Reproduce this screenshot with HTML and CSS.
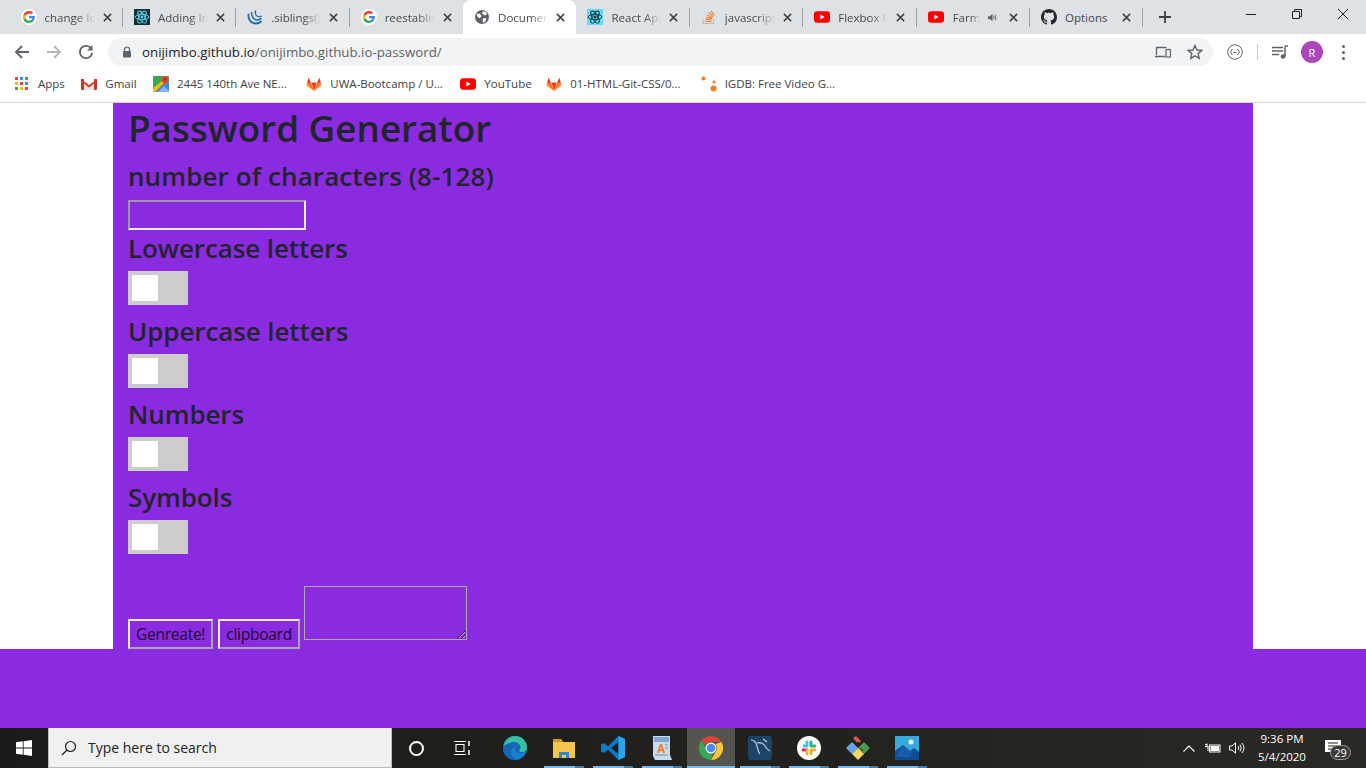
FILE: index.html
```html
<!DOCTYPE html>
<html lang="en">
<head>
<meta charset="utf-8">
<title>Document</title>
<link rel="stylesheet" href="styles.css">
</head>
<body>
<svg class="defs" width="0" height="0" aria-hidden="true">
  <symbol id="i-google" viewBox="0 0 16 16">
    <circle cx="8" cy="8" r="8" fill="#fff"/>
    <path d="M13.9 8.1c0-.4 0-.8-.1-1.2H8v2.300h3.300a2.900 2.900 0 0 1-1.200 1.900v1.500h2A6 6 0 0 0 13.900 8.100z" fill="#4285f4"/>
    <path d="M8 14c1.600 0 3-.5 4.100-1.400l-2-1.500c-.6.4-1.300.6-2.100.6-1.600 0-2.900-1.100-3.400-2.500H2.500v1.600A6 6 0 0 0 8 14z" fill="#34a853"/>
    <path d="M4.600 9.200a3.600 3.600 0 0 1 0-2.400V5.200H2.500a6 6 0 0 0 0 5.600z" fill="#fbbc05"/>
    <path d="M8 4.400c.9 0 1.700.3 2.300.9l1.800-1.800A6 6 0 0 0 2.500 5.200l2.100 1.600C5.100 5.400 6.400 4.400 8 4.400z" fill="#ea4335"/>
  </symbol>
  <symbol id="i-atom" viewBox="0 0 16 16">
    <g fill="none" stroke="currentColor" stroke-width=".9">
      <ellipse cx="8" cy="8" rx="6.800" ry="2.700"/>
      <ellipse cx="8" cy="8" rx="6.800" ry="2.700" transform="rotate(60 8 8)"/>
      <ellipse cx="8" cy="8" rx="6.800" ry="2.700" transform="rotate(120 8 8)"/>
    </g>
    <circle cx="8" cy="8" r="1.400" fill="currentColor"/>
  </symbol>
  <symbol id="i-jquery" viewBox="0 0 16 16">
    <g fill="none" stroke="#1f69a8" stroke-linecap="round">
      <path d="M1.500 5.500C.8 10 4 14.500 9 14.500c2 0 3.600-.7 5-2" stroke-width="1.800"/>
      <path d="M4.700 3.500C4 7.500 7 11 10.500 11c1.200 0 2.400-.4 3.500-1.300" stroke-width="1.500"/>
      <path d="M8.500 1.800C7.700 5 9.500 7.800 12 7.800c.8 0 1.500-.2 2.200-.7" stroke-width="1.300"/>
    </g>
  </symbol>
  <symbol id="i-globe" viewBox="0 0 16 16">
    <circle cx="8" cy="8" r="7" fill="#5f6368"/>
    <path d="M3 4.500l3 .5 1.500 2-1 1.500L5 9 2.800 7zM9 2.300l3 .7 1 2-2 1.500-1.500-1-1.500-1zM9.500 9l3 .5-1.500 3.500-2 .7-.5-2.500z" fill="#fff"/>
  </symbol>
  <symbol id="i-so" viewBox="0 0 16 16">
    <path d="M2 10v4.500h10.500V10" fill="none" stroke="#bcbbbb" stroke-width="1.200"/>
    <path d="M4.200 12.500h6.200M4.400 10.400l6 .6M5 8.300l5.900 1.400M6.200 6l5.300 2.700M7.800 3.800l4.600 3.800M10 1.800l3.300 4.700" fill="none" stroke="#f48024" stroke-width="1.200"/>
  </symbol>
  <symbol id="i-yt" viewBox="0 0 16 12">
    <rect width="16" height="11.500" y=".2" rx="3" fill="#f00"/>
    <path d="M6.400 3.500v5l4.200-2.500z" fill="#fff"/>
  </symbol>
  <symbol id="i-github" viewBox="0 0 16 16">
    <path fill="#24292e" d="M8 0C3.580 0 0 3.580 0 8c0 3.540 2.290 6.530 5.470 7.590.4.070.55-.17.55-.38 0-.19-.01-.82-.01-1.490-2.010.37-2.530-.49-2.690-.94-.09-.23-.48-.94-.82-1.130-.28-.15-.68-.52-.01-.53.63-.01 1.080.58 1.230.82.720 1.210 1.870.87 2.330.66.070-.52.280-.87.510-1.070-1.780-.2-3.640-.89-3.640-3.950 0-.87.310-1.590.820-2.150-.08-.2-.36-1.020.080-2.120 0 0 .67-.21 2.200.82.640-.18 1.320-.27 2-.27s1.360.09 2 .27c1.530-1.040 2.200-.82 2.200-.82.440 1.100.160 1.920.080 2.120.510.560.820 1.270.820 2.150 0 3.070-1.870 3.750-3.650 3.950.290.250.540.730.540 1.480 0 1.070-.010 1.930-.010 2.200 0 .21.150.46.550.38A8.013 8.013 0 0 0 16 8c0-4.420-3.580-8-8-8z"/>
  </symbol>
  <symbol id="i-gitlab" viewBox="0 0 16 16">
    <path d="M8 15L.5 9.300 1 7.500z" fill="#fc6d26"/>
    <path d="M8 15l7.500-5.700-.5-1.800z" fill="#fc6d26"/>
    <path d="M8 15L5.200 6.500h5.600z" fill="#e24329"/>
    <path d="M8 15L1 7.500h4.200zM8 15l7-7.500h-4.200z" fill="#fc6d26"/>
    <path d="M1 7.500l1.700-6 2.500 6zM15 7.500l-1.700-6-2.500 6z" fill="#e24329"/>
    <path d="M.5 9.300L1 7.500l7 7.500zM15.500 9.300l-.5-1.800-7 7.500z" fill="#fca326"/>
  </symbol>
  <symbol id="i-x" viewBox="0 0 10 10">
    <path d="M1 1l8 8M9 1L1 9" fill="none" stroke="currentColor" stroke-width="1.700"/>
  </symbol>
</svg>

<div class="page">
  <header class="chrome">
    <div class="tabstrip">
      <div class="tab sep"><svg class="fav"><use href="#i-google"/></svg><span class="tab-title">change Ico</span><svg class="close"><use href="#i-x"/></svg></div>
      <div class="tab sep"><span class="fav-box fav-dark"><svg class="fav-in"><use href="#i-atom"/></svg></span><span class="tab-title">Adding Im</span><svg class="close"><use href="#i-x"/></svg></div>
      <div class="tab sep"><svg class="fav"><use href="#i-jquery"/></svg><span class="tab-title">.siblings()</span><svg class="close"><use href="#i-x"/></svg></div>
      <div class="tab"><svg class="fav"><use href="#i-google"/></svg><span class="tab-title">reestablish</span><svg class="close"><use href="#i-x"/></svg></div>
      <div class="tab active"><svg class="fav"><use href="#i-globe"/></svg><span class="tab-title">Document</span><svg class="close"><use href="#i-x"/></svg></div>
      <div class="tab sep"><span class="fav-box fav-react"><svg class="fav-in"><use href="#i-atom"/></svg></span><span class="tab-title">React App</span><svg class="close"><use href="#i-x"/></svg></div>
      <div class="tab sep"><svg class="fav"><use href="#i-so"/></svg><span class="tab-title">javascript</span><svg class="close"><use href="#i-x"/></svg></div>
      <div class="tab sep"><svg class="fav"><use href="#i-yt"/></svg><span class="tab-title">Flexbox U</span><svg class="close"><use href="#i-x"/></svg></div>
      <div class="tab sep"><svg class="fav"><use href="#i-yt"/></svg><span class="tab-title short">Farm</span>
        <svg class="speaker" viewBox="0 0 12 12"><path d="M1 4.500h2L6 2v8L3 7.500H1z" fill="#5f6368"/><path d="M7.500 4v4M9.500 3v6" stroke="#5f6368" fill="none"/></svg>
        <svg class="close"><use href="#i-x"/></svg></div>
      <div class="tab sep"><svg class="fav"><use href="#i-github"/></svg><span class="tab-title plain">Options</span><svg class="close"><use href="#i-x"/></svg></div>
      <svg class="newtab" viewBox="0 0 12 12"><path d="M6 0v12M0 6h12" stroke="#3c4043" stroke-width="1.800" fill="none"/></svg>
      <div class="winctl">
        <svg class="winbtn" viewBox="0 0 12 12"><path d="M1 6.500h10" stroke="#222" fill="none"/></svg>
        <svg class="winbtn" viewBox="0 0 12 12"><path d="M1.500 3.500h7v7h-7zM3.500 3.500v-2h7v7h-2" stroke="#222" fill="none"/></svg>
        <svg class="winbtn" viewBox="0 0 12 12"><path d="M1 1l10 10M11 1L1 11" stroke="#222" fill="none"/></svg>
      </div>
    </div>
    <div class="toolbar">
      <svg class="nav" viewBox="0 0 16 16"><path d="M15 8H2M8 2L2 8l6 6" fill="none" stroke="#5f6368" stroke-width="1.800"/></svg>
      <svg class="nav" viewBox="0 0 16 16"><path d="M1 8h13M8 2l6 6-6 6" fill="none" stroke="#b4b6b9" stroke-width="1.800"/></svg>
      <svg class="nav" viewBox="0 0 16 16"><path d="M13.500 5A6.200 6.200 0 1 0 14.200 9" fill="none" stroke="#5f6368" stroke-width="1.800"/><path d="M14.500 1v5.500H9z" fill="#5f6368"/></svg>
      <div class="omnibox">
        <svg class="lock" viewBox="0 0 10 12"><path d="M2.500 5V3.500a2.500 2.500 0 0 1 5 0V5" fill="none" stroke="#5f6368" stroke-width="1.200"/><rect x="1" y="5" width="8" height="6.500" rx="1" fill="#5f6368"/></svg>
        <span class="url"><span class="url-host">onijimbo.github.io</span>/onijimbo.github.io-password/</span>
        <svg class="omni-ic cast" viewBox="0 0 16 12"><path d="M1.500 9V1.500h10M0 10.500h10" fill="none" stroke="#5f6368" stroke-width="1.300"/><rect x="11" y="3.500" width="4.500" height="7.500" fill="none" stroke="#5f6368" stroke-width="1.200"/></svg>
        <svg class="omni-ic" viewBox="0 0 16 16"><path d="M8 1.500l2 4.500 4.800.4-3.700 3.200 1.100 4.800L8 11.900l-4.200 2.500 1.100-4.800L1.200 6.400 6 6z" fill="none" stroke="#5f6368" stroke-width="1.400"/></svg>
      </div>
      <div class="tools">
        <svg class="ext" viewBox="0 0 16 16"><circle cx="8" cy="8" r="7.300" fill="none" stroke="#5f6368"/><path d="M5.500 5L3.500 8l2 3M10.500 5l2 3-2 3M6.500 8.500h3" fill="none" stroke="#5f6368"/></svg>
        <span class="tool-sep"></span>
        <svg class="queue" viewBox="0 0 16 14"><path d="M0 2.500h11M0 6h11M0 9.500h7" stroke="#5f6368" stroke-width="1.300" fill="none"/><path d="M13 1.500v10" stroke="#5f6368" stroke-width="1.500"/><path d="M13 1h3" stroke="#5f6368" stroke-width="1.500"/><circle cx="11" cy="11.500" r="2.300" fill="#5f6368"/></svg>
        <span class="avatar">R</span>
        <span class="kebab"><i></i><i></i><i></i></span>
      </div>
    </div>
    <nav class="bookmarks">
      <span class="bm"><svg class="bm-ic apps" viewBox="0 0 13 13"><g>
        <rect width="3" height="3" fill="#ea4335"/><rect x="5" width="3" height="3" fill="#4285f4"/><rect x="10" width="3" height="3" fill="#34a853"/>
        <rect y="5" width="3" height="3" fill="#fbbc05"/><rect x="5" y="5" width="3" height="3" fill="#ea4335"/><rect x="10" y="5" width="3" height="3" fill="#4285f4"/>
        <rect y="10" width="3" height="3" fill="#34a853"/><rect x="5" y="10" width="3" height="3" fill="#fbbc05"/><rect x="10" y="10" width="3" height="3" fill="#ea4335"/></g></svg>Apps</span>
      <span class="bm"><svg class="bm-ic" viewBox="0 0 16 12"><path d="M0 1h3v11H1a1 1 0 0 1-1-1zM13 1h3v10a1 1 0 0 1-1 1h-2z" fill="#c5362b"/><path d="M3 12V4l5 4 5-4v8z" fill="#e7e4df"/><path d="M0 1l8 6 8-6v2.500L8 9.500 0 3.500z" fill="#d8402f"/></svg>Gmail</span>
      <span class="bm"><svg class="bm-ic" viewBox="0 0 16 16"><rect width="16" height="16" rx="1" fill="#34a853"/><path d="M0 16L16 5v11z" fill="#4285f4" opacity=".9"/><path d="M0 12L9 5l2 2-9 9H0z" fill="#fbbc05"/><path d="M5 16l6-6 5 5v1z" fill="#8ab4f8"/><path d="M12 0a3.500 3.500 0 0 1 3.500 3.500c0 2.500-3.500 5-3.500 5s-3.500-2.500-3.500-5A3.500 3.500 0 0 1 12 0z" fill="#ea4335"/><circle cx="12" cy="3.500" r="1.200" fill="#a52714"/></svg>2445 140th Ave NE...</span>
      <span class="bm"><svg class="bm-ic"><use href="#i-gitlab"/></svg>UWA-Bootcamp / U...</span>
      <span class="bm"><svg class="bm-ic"><use href="#i-yt"/></svg>YouTube</span>
      <span class="bm"><svg class="bm-ic"><use href="#i-gitlab"/></svg>01-HTML-Git-CSS/0...</span>
      <span class="bm"><svg class="bm-ic" viewBox="0 0 16 16"><g fill="#f47b20"><circle cx="2.500" cy="2.500" r="2"/><circle cx="13" cy="6" r="1.500"/><circle cx="12.500" cy="12.500" r="3"/></g></svg>IGDB: Free Video G...</span>
    </nav>
  </header>

  <div class="viewport">
    <div class="sheet">
      <main class="container">
        <h1 class="title">Password Generator</h1>
        <h3 class="field-label">number of characters (8-128)</h3>
        <input class="count" type="text">
        <h3 class="field-label after-input">Lowercase letters</h3>
        <span class="switch"><span class="knob"></span></span>
        <h3 class="field-label">Uppercase letters</h3>
        <span class="switch"><span class="knob"></span></span>
        <h3 class="field-label">Numbers</h3>
        <span class="switch"><span class="knob"></span></span>
        <h3 class="field-label">Symbols</h3>
        <span class="switch"><span class="knob"></span></span>
        <div class="actions">
          <button class="btn" type="button">Genreate!</button>
          <button class="btn" type="button">clipboard</button>
          <textarea class="output"></textarea>
        </div>
      </main>
    </div>
  </div>

  <footer class="taskbar">
    <div class="start"><svg class="winlogo" viewBox="0 0 16 16"><path d="M0 2.300L6.800 1.300V7.600H0zM7.600 1.200L16 0V7.600H7.600zM0 8.400H6.800V14.700L0 13.700zM7.600 8.400H16V16L7.600 14.800z" fill="#fff"/></svg></div>
    <div class="search"><svg class="search-ic" viewBox="0 0 16 16"><circle cx="9.500" cy="6.500" r="5" fill="none" stroke="#222" stroke-width="1.200"/><path d="M6 10L1 15" stroke="#222" stroke-width="1.300"/></svg><span>Type here to search</span></div>
    <div class="tb-cell cortana"><span class="ring"></span></div>
    <div class="tb-cell taskview"><svg class="tb-view" viewBox="0 0 18 16"><path d="M0 1.500h12M0 14.500h12M2 4.500h8v7H2z" fill="none" stroke="#fff" stroke-width="1.100"/><path d="M15 1v5M15 10v5" stroke="#fff" stroke-width="1.500"/></svg></div>
    <div class="tb-cell"><svg class="tb-ic" viewBox="0 0 24 24"><circle cx="12" cy="12" r="12" fill="#1c7ed0"/><path d="M24 12c0 3-3 5-7 5-3 0-5-1.500-5-3.500 0-1.500 1-2.500 2-3-3 0-6 2.500-6 6 0 3 2 6 6 7.500C5 24 0 19 0 12 0 5 5.500 0 12 0c7 0 12 5 12 12z" fill="#1565b8"/><path d="M24 12c0 2.500-2 4-5 4-2 0-3-.7-3-1.500 0-1 1.500-1 1.500-3 0-3-3-5.500-6.500-5.500C7 6 2 9 .5 10 2 4 6.500 0 12 0c7 0 12 5 12 12z" fill="#35c1a0"/></svg></div>
    <div class="tb-cell"><svg class="tb-ic" viewBox="0 0 24 24"><path d="M1 3h8l2 3h12v16H1z" fill="#f4c64e"/><path d="M1 3h8l2 3H1z" fill="#d19a1c"/><path d="M7 22v-6h10v6h-3v-3h-4v3z" fill="#2b88d8"/></svg><span class="run"></span></div>
    <div class="tb-cell"><svg class="tb-ic" viewBox="0 0 24 24"><path d="M17.500 0L24 3v18l-6.500 3L7 13.800 2.700 17 0 15.500v-7L2.700 7 7 10.200z" fill="#0a7cc9"/><path d="M17.500 6L10 12l7.500 6z" fill="#1c1c1c"/><path d="M17.500 0L24 3v18l-6.500 3z" fill="#2aa4ee"/></svg><span class="run"></span></div>
    <div class="tb-cell"><svg class="tb-ic" viewBox="0 0 24 24"><path d="M3 0h17v19l2 5H5l-2-4z" fill="#c9dcec"/><path d="M4 1h15v5H4z" fill="#7da7cc"/><path d="M7 17l3-9h2l3 9h-2l-.6-2H9.600L9 17zm3-3.500h2l-1-3.500z" fill="#ee7d1a"/><path d="M15 9h3M15 12h3M5 19h13" stroke="#6f8fae"/></svg><span class="run"></span></div>
    <div class="tb-cell on"><svg class="tb-ic" viewBox="0 0 24 24"><path d="M12 0a12 12 0 0 1 10.400 6H12a6 6 0 0 0-5.500 3.600L2.600 4.500A12 12 0 0 1 12 0z" fill="#db4437"/><path d="M22.400 6A12 12 0 0 1 12 24l5.200-9A6 6 0 0 0 16.500 8z" fill="#fcc934"/><path d="M12 24A12 12 0 0 1 2.600 4.500l5 8.700A6 6 0 0 0 14 17.600z" fill="#34a853"/><circle cx="12" cy="12" r="5.500" fill="#fff"/><circle cx="12" cy="12" r="4.300" fill="#4a8af4"/></svg><span class="run full"></span></div>
    <div class="tb-cell"><svg class="tb-ic" viewBox="0 0 24 24"><rect width="24" height="24" rx="3" fill="#1e4568"/><path d="M3 4c3 0 5 2 6 6 1 3 1 6 3 8M9 7c3-1 6 0 8 3 1 2 3 4 5 5M15 3l4 3" fill="none" stroke="#c9d6e2" stroke-width="1.100"/></svg><span class="run"></span></div>
    <div class="tb-cell"><svg class="tb-ic" viewBox="0 0 24 24"><circle cx="12" cy="12" r="12" fill="#fff"/><g stroke-width="2.800" stroke-linecap="round" fill="none"><path d="M6 14h4M14 7.500v2" stroke="#e01e5a"/><path d="M10 6v4M10 10H7" stroke="#36c5f0"/><path d="M14 10h4M14 6v4" stroke="#2eb67d"/><path d="M14 14h4M14 14v4M10 14v4" stroke="#ecb22e"/></g></svg><span class="run"></span></div>
    <div class="tb-cell"><svg class="tb-ic" viewBox="0 0 24 24"><path d="M7 2l3-2 5 5-3 3z" fill="#e9574f"/><path d="M0 12l6-6 6 6-6 6z" fill="#6aa2e8"/><path d="M12 12l6-6 6 6-6 6z" fill="#4b9a4b"/><path d="M6 18l6-6 6 6-6 6z" fill="#f0d860"/><path d="M12 6l2 2-2 2-2-2zM14 12l3 3" stroke="#222" fill="#222"/></svg><span class="run"></span></div>
    <div class="tb-cell"><svg class="tb-ic" viewBox="0 0 24 24"><rect width="24" height="24" fill="#36a9e1"/><path d="M0 24V15l8-6 7 6 4-3 5 4v8z" fill="#124c96"/><path d="M8 9l7 6 4-3-4 9H0z" fill="#1d66b8" opacity=".6"/><circle cx="16" cy="6" r="2.500" fill="#e8f4fb"/></svg><span class="run"></span></div>
    <div class="tray">
      <svg class="tray-up" viewBox="0 0 12 7"><path d="M.5 6.500L6 1l5.500 5.500" fill="none" stroke="#fff" stroke-width="1.100"/></svg>
      <svg class="tray-bat" viewBox="0 0 16 10"><path d="M0 1.500h2M0 3.500h2M2 .5v4" stroke="#fff" fill="none"/><rect x="4.500" y="2" width="10.500" height="7" fill="none" stroke="#fff"/><rect x="5.500" y="3" width="8.500" height="5" fill="#fff"/><path d="M3 3v5" stroke="#fff"/></svg>
      <svg class="tray-vol" viewBox="0 0 16 12"><path d="M.5 4h2.500L6.500.8v10.400L3 8H.5z" fill="none" stroke="#fff"/><path d="M9 4a3 3 0 0 1 0 4M11 2.500a6 6 0 0 1 0 7M13 1a8 8 0 0 1 0 10" fill="none" stroke="#fff"/></svg>
      <div class="clock"><span>9:36 PM</span><span>5/4/2020</span></div>
      <div class="notif"><svg class="notif-ic" viewBox="0 0 16 14"><path d="M0 0h16v12H0z" fill="#fff"/><path d="M3 3h10M3 6h10M3 9h7" stroke="#222"/></svg><span class="badge">29</span></div>
    </div>
  </footer>
</div>
</body>
</html>
```

FILE: styles.css
```css
* { box-sizing: border-box; }
html, body { margin: 0; height: 100%; overflow: hidden; }
body { font-family: "Open Sans", "Noto Sans", sans-serif; color: #212529; }
.defs { position: absolute; }

.page { display: flex; flex-direction: column; height: 768px; background: #8a2be2; }

/* browser chrome */
.chrome { background: #fff; height: 103px; flex: none; border-bottom: 1px solid #d6d8da; }
.tabstrip { height: 34px; background: #dee1e6; display: flex; align-items: center; padding-left: 9.500px; }
.tab { position: relative; width: 113.400px; height: 34px; display: flex; align-items: center; padding-left: 11px; flex: none; font-size: 11.500px; color: #45484c; }
.tab.sep::after { content: ""; position: absolute; right: 0; top: 8px; height: 19px; width: 1px; background: #9ea1a5; }
.tab.active { background: #fff; border-radius: 8px 8px 0 0; }
.fav, .fav-box { width: 16px; height: 16px; flex: none; }
.fav-box { display: flex; align-items: center; justify-content: center; }
.fav-dark { background: #10312f; color: #61dafb; }
.fav-react { background: #61dafb; color: #10312f; }
.fav-in { width: 16px; height: 16px; }
.tab-title { margin-left: 8px; width: 50px; white-space: nowrap; overflow: hidden; -webkit-mask-image: linear-gradient(90deg, #000 65%, transparent); mask-image: linear-gradient(90deg, #000 65%, transparent); }
.tab-title.short { margin-left: 9px; width: 27px; }
.tab-title.plain { width: 56px; -webkit-mask-image: none; mask-image: none; }
.close { width: 9px; height: 9px; margin-left: 8px; flex: none; color: #3f4144; }
.tab-title.plain + .close { margin-left: 1px; }
.speaker { width: 11px; height: 11px; margin-left: 7px; flex: none; }
.speaker + .close { margin-left: 11px; }
.newtab { width: 12px; height: 12px; margin-left: 16px; flex: none; }
.winctl { margin-left: auto; display: flex; align-items: center; gap: 34px; padding-right: 17px; height: 28px; align-self: flex-start; }
.winbtn { width: 12px; height: 12px; }

.toolbar { height: 34px; display: flex; align-items: center; padding: 2px 0 0 14px; }
.nav { width: 16px; height: 16px; margin-right: 16px; flex: none; }
.omnibox { width: 1105px; margin-left: -2px; height: 28px; border-radius: 14px; background: #f1f3f4; display: flex; align-items: center; padding-left: 14px; padding-right: 10px; flex: none; }
.lock { width: 10px; height: 12px; flex: none; }
.url { margin-left: 10px; font-size: 13.300px; color: #5f6368; white-space: nowrap; flex: 1; }
.url-host { color: #202124; }
.omni-ic { width: 16px; height: 16px; margin-left: 16px; flex: none; }
.cast { height: 12px; }
.tools { display: flex; align-items: center; flex: 1; padding-left: 14px; }
.ext { width: 16px; height: 16px; flex: none; }
.tool-sep { width: 1px; height: 16px; background: #c8cacc; margin: 0 14px 0 14px; }
.queue { width: 16px; height: 14px; flex: none; }
.avatar { width: 22px; height: 22px; border-radius: 50%; background: #ab47bc; color: #fff; font-size: 11px; display: flex; align-items: center; justify-content: center; margin-left: 13px; }
.kebab { display: flex; flex-direction: column; gap: 3px; margin-left: 19px; }
.kebab i { width: 3px; height: 3px; border-radius: 50%; background: #5f6368; display: block; }

.bookmarks { height: 34px; display: flex; align-items: center; padding: 0 0 3px 15px; gap: 16.500px; font-size: 11.500px; color: #3c4043; }
.bm { display: flex; align-items: center; white-space: nowrap; }
.bm:nth-child(3) { margin-right: 3px; }
.bm:nth-child(4) { margin-right: 1px; }
.bm:nth-child(5) { margin-right: -2px; }
.bm:nth-child(6) { margin-right: 3.500px; }
.bm-ic { width: 16px; height: 16px; margin-right: 8px; flex: none; }
.bm-ic.apps { width: 13px; height: 13px; margin-right: 10px; }

/* page content */
.viewport { height: 625px; flex: none; background: #8a2be2; }
.sheet { height: 546px; background: #fff; }
.container { width: 1140px; height: 546px; margin: 0 auto; padding: 0 15px; background: #8a2be2; display: flex; flex-direction: column; align-items: flex-start; }
.container > * { flex: none; }
.title { font-size: 36.800px; font-weight: 600; line-height: 48px; margin: 1px 0 7px; }
.field-label { font-size: 26px; font-weight: 600; line-height: 34px; margin: 0 0 6px; white-space: nowrap; letter-spacing: -.1px; }
.field-label:first-of-type { letter-spacing: .1px; }
.count { width: 178px; height: 30px; background: transparent; border: 2px solid; border-color: #9a9a9a #eee #eee #9a9a9a; margin-top: 1px; padding: 0; display: block; }
.after-input { margin-top: 1px; }
.switch { display: block; width: 60px; height: 34px; background: #ccc; padding: 4px; margin-bottom: 9px; }
.knob { display: block; width: 26px; height: 26px; background: #fff; }
.actions { display: flex; align-items: flex-end; margin-top: 23px; font-size: 16px; }
.btn { height: 30px; padding: 0 6px; margin-right: 5px; font: 15.500px "Open Sans", "Noto Sans", sans-serif; color: #1a0a2e; background: transparent; border: 2px solid; border-color: #eee #a9a9a9 #a9a9a9 #eee; white-space: nowrap; letter-spacing: -.25px; }
.btn + .btn { margin-right: 4px; }
.output { width: 163px; height: 54px; margin-bottom: 9px; background: transparent; border: 1px solid #a9a9a9; display: block; }

/* taskbar */
.taskbar { height: 40px; flex: none; display: flex; background: linear-gradient(90deg, #1d1b19, #23211e 60%, #2b2926); color: #fff; }
.start { width: 48px; display: flex; align-items: center; justify-content: center; }
.winlogo { width: 16px; height: 16px; }
.search { width: 344px; background: #f0f0f0; border-bottom: 1px solid #bbb; border-left: 1px solid #bbb; border-right: 1px solid #bbb; display: flex; align-items: center; padding-left: 12px; color: #222; font-size: 14px; }
.search-ic { width: 16px; height: 16px; margin-right: 11px; }
.tb-cell { position: relative; width: 49px; display: flex; align-items: center; justify-content: center; flex: none; }
.cortana { width: 48px; }
.taskview { width: 46px; margin-right: 4px; }
.ring { width: 15px; height: 15px; border: 2px solid #fff; border-radius: 50%; }
.tb-view { width: 18px; height: 16px; }
.tb-ic { width: 24px; height: 24px; display: block; }
.on { background: #55544f; width: 48px; margin-left: 1px; }
.run { position: absolute; left: 5px; right: 4px; bottom: 0; height: 2px; background: linear-gradient(90deg, #76b9ed 78%, #4a7da3 78%); }
.run.full { left: 0; right: 0; background: #76b9ed; }
.tray { margin-left: auto; display: flex; align-items: center; padding-right: 23px; }
.tray-up { width: 12px; height: 7px; }
.tray-bat { width: 16px; height: 10px; margin-left: 10px; }
.tray-vol { width: 16px; height: 12px; margin-left: 8px; }
.clock { display: flex; flex-direction: column; align-items: center; font-size: 11.500px; line-height: 18px; margin-left: 6px; width: 62px; }
.notif { position: relative; width: 18px; height: 16px; margin-left: 12px; }
.notif-ic { width: 16px; height: 14px; display: block; }
.badge { position: absolute; left: 5px; top: 5px; width: 21px; height: 15px; border-radius: 8px; background: #3a3a3a; border: 1px solid #999; color: #fff; font-size: 11px; line-height: 13px; text-align: center; }
```
